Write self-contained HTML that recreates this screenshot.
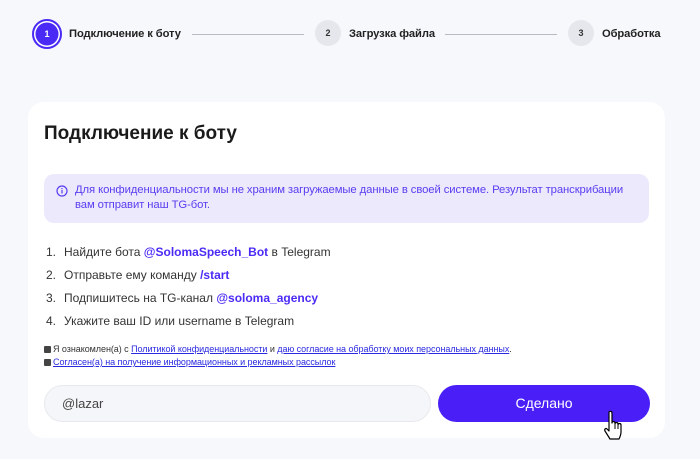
<!DOCTYPE html>
<html><head><meta charset="utf-8"><style>
*{margin:0;padding:0;box-sizing:border-box}
body{width:700px;height:459px;background:#f7f8fc;font-family:"Liberation Sans",sans-serif;position:relative;overflow:hidden;color:#222}
.a{position:absolute}
.c{position:absolute;border-radius:50%;background:#e6e7ec;color:#333;font-size:9px;font-weight:bold;display:flex;align-items:center;justify-content:center}
.lbl{position:absolute;font-size:11.2px;font-weight:bold;color:#222;top:28px;letter-spacing:-0.1px}
.ln{position:absolute;height:1px;background:#b8bac4;top:34px}
.card{position:absolute;left:28px;top:102px;width:637px;height:336px;background:#fff;border-radius:16px}
.li{position:absolute;left:46px;font-size:12px;color:#333}
.li b{color:#4a2bf5}
.li span{display:inline-block;width:18px}
.cb{display:inline-block;width:7px;height:7px;background:#444;border-radius:1px;vertical-align:-1px;margin-right:2px}
.sm{position:absolute;left:44px;font-size:9px;color:#333;letter-spacing:-0.05px}
.sm a{color:#2a2ae0;text-decoration:underline}
</style></head><body>
<div class="c" style="left:32px;top:19px;width:30px;height:30px;background:#4a2bf5;box-shadow:inset 0 0 0 2px #4a2bf5,inset 0 0 0 3.5px #fff;color:#fff">1</div>
<div class="lbl" style="left:69px">Подключение к боту</div>
<div class="ln" style="left:192px;width:112px"></div>
<div class="c" style="left:315px;top:20px;width:26px;height:26px">2</div>
<div class="lbl" style="left:349px">Загрузка файла</div>
<div class="ln" style="left:445px;width:112px"></div>
<div class="c" style="left:568px;top:20px;width:26px;height:26px">3</div>
<div class="lbl" style="left:602px">Обработка</div>
<div class="card"></div>
<div class="a" style="left:44px;top:123px;font-size:19px;font-weight:bold;color:#1a1a1a">Подключение к боту</div>
<div class="a" style="left:44px;top:174px;width:605px;height:49px;background:#ece9fd;border-radius:10px"></div>
<svg class="a" style="left:56px;top:185px" width="12" height="12" viewBox="0 0 12 12"><circle cx="6" cy="6" r="5" fill="none" stroke="#5a3cf0" stroke-width="1.2"/><rect x="5.4" y="5" width="1.2" height="3.5" fill="#5a3cf0"/><rect x="5.4" y="3" width="1.2" height="1.2" fill="#5a3cf0"/></svg>
<div class="a" style="left:75px;top:183px;font-size:11.3px;line-height:15px;color:#5a3cf0;width:560px;letter-spacing:-0.1px">Для конфиденциальности мы не храним загружаемые данные в своей системе. Результат транскрибации<br>вам отправит наш TG-бот.</div>
<div class="li" style="top:245px"><span>1.</span>Найдите бота <b>@SolomaSpeech_Bot</b> в Telegram</div>
<div class="li" style="top:268px"><span>2.</span>Отправьте ему команду <b>/start</b></div>
<div class="li" style="top:291px"><span>3.</span>Подпишитесь на TG-канал <b>@soloma_agency</b></div>
<div class="li" style="top:314px"><span>4.</span>Укажите ваш ID или username в Telegram</div>
<div class="sm" style="top:344px"><i class="cb"></i>Я ознакомлен(а) с <a>Политикой конфиденциальности</a> и <a>даю согласие на обработку моих персональных данных</a>.</div>
<div class="sm" style="top:357px"><i class="cb"></i><a>Согласен(а) на получение информационных и рекламных рассылок</a></div>
<div class="a" style="left:44px;top:385px;width:387px;height:37px;background:#f5f6f9;border:1px solid #e8e9ee;border-radius:19px;font-size:13px;color:#444;padding:10px 0 0 17px">@lazar</div>
<div class="a" style="left:438px;top:385px;width:212px;height:37px;background:#4a1ff7;border-radius:19px;color:#fff;font-size:14px;text-align:center;line-height:37px">Сделано</div>
<svg class="a" style="left:602px;top:410px" width="26" height="32" viewBox="0 0 26 32"><path d="M7 2c1-1 3-1 3 1v10c0-2 3-2 3 0v1c0-2 3-2 3 0v1c0-2 3-2 3 0v7c0 3-1 5-2 7H8l-5-8c-1-2 1-3 2-2l2 2V3z" fill="#fff" stroke="#000" stroke-width="1.2" stroke-linejoin="round"/><path d="M13 14v5M16 15v4M19 16v3" stroke="#000" stroke-width="1"/></svg>
</body></html>
